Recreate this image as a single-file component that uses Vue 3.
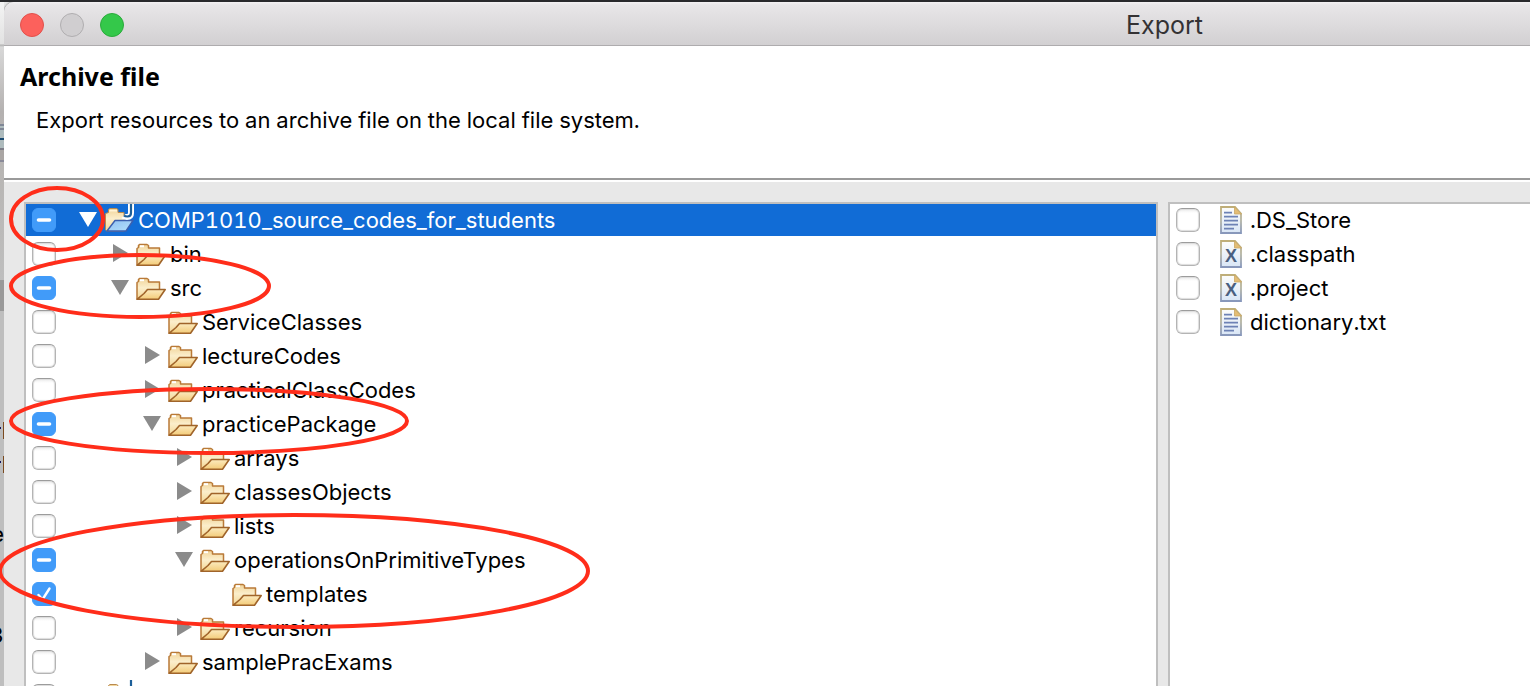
<script setup>
import { ref } from 'vue'

const tree = ref([
  { name: 'COMP1010_source_codes_for_students', depth: 0, state: 'mixed', open: true, project: true, selected: true },
  { name: 'bin', depth: 1, state: 'off', open: false },
  { name: 'src', depth: 1, state: 'mixed', open: true },
  { name: 'ServiceClasses', depth: 2, state: 'off', leaf: true },
  { name: 'lectureCodes', depth: 2, state: 'off', open: false },
  { name: 'practicalClassCodes', depth: 2, state: 'off', open: false },
  { name: 'practicePackage', depth: 2, state: 'mixed', open: true },
  { name: 'arrays', depth: 3, state: 'off', open: false },
  { name: 'classesObjects', depth: 3, state: 'off', open: false },
  { name: 'lists', depth: 3, state: 'off', open: false },
  { name: 'operationsOnPrimitiveTypes', depth: 3, state: 'mixed', open: true },
  { name: 'templates', depth: 4, state: 'on', leaf: true },
  { name: 'recursion', depth: 3, state: 'off', open: false },
  { name: 'samplePracExams', depth: 2, state: 'off', open: false },
  { name: '', depth: 0, state: 'off', leaf: true, project: true },
])

const files = ref([
  { name: '.DS_Store', kind: 'text', on: false },
  { name: '.classpath', kind: 'xml', on: false },
  { name: '.project', kind: 'xml', on: false },
  { name: 'dictionary.txt', kind: 'text', on: false },
])

function toggle(row) {
  row.state = row.state === 'on' ? 'off' : 'on'
}
</script>

<template>
  <div class="desktop">
    <div class="behind" aria-hidden="true">
      <i class="stripes"></i>
      <i class="thumb"></i>
      <i class="mark first"></i>
      <i class="mark second"></i>
      <span class="bit upper">e</span>
      <span class="bit lower">3</span>
    </div>

    <section class="window">
      <header class="titlebar">
        <div class="lights">
          <button type="button" class="light close" aria-label="Close"></button>
          <button type="button" class="light minimise" aria-label="Minimise" disabled></button>
          <button type="button" class="light zoom" aria-label="Zoom"></button>
        </div>
        <span class="title">Export</span>
      </header>

      <div class="banner">
        <h1>Archive file</h1>
        <p>Export resources to an archive file on the local file system.</p>
      </div>

      <main class="body">
        <ul class="pane" aria-label="Folders">
          <li v-for="(row, i) in tree" :key="i" class="row" :class="{ selected: row.selected }">
            <span class="check">
              <input
                :id="'folder-' + i"
                type="checkbox"
                :aria-label="row.name || 'Project'"
                :checked="row.state === 'on'"
                :indeterminate.prop="row.state === 'mixed'"
                @change="toggle(row)"
              />
              <svg v-if="row.state === 'mixed'" viewBox="0 0 24 24"><path d="M6.500 12H17.500" stroke-width="3.600" /></svg>
              <svg v-else-if="row.state === 'on'" viewBox="0 0 24 24"><path d="M6.500 13L10.500 17.500L17.500 6.500" stroke-width="2.400" /></svg>
            </span>
            <span class="indent" :style="{ width: row.depth * 32 + 'px' }"></span>
            <span v-if="row.leaf" class="arrow"></span>
            <button
              v-else
              type="button"
              class="arrow"
              :aria-expanded="row.open"
              :aria-label="'Toggle ' + row.name"
            >
              <svg viewBox="0 0 20 32">
                <path v-if="row.open" d="M1 8H19L10 23Z" />
                <path v-else d="M3 6L18 15L3 24Z" />
              </svg>
            </button>
            <svg v-if="row.project" class="folder" viewBox="0 0 32 32">
              <path d="M4.500 8.500V5.500L6 4.500H12.500L14 5.500V8.500H20V27H2.500L1.500 25.500V9.500Z" fill="url(#tan)" stroke="#b98a4e" stroke-width="1" />
              <path d="M5.500 6.800H13" stroke="#fff3d6" stroke-width="1.600" />
              <path d="M11 16.500H29L22 27H3Z" fill="url(#sky)" stroke="#3c5fae" stroke-width="1.400" stroke-linejoin="round" />
              <path d="M27 0V9Q27 13 23 13Q20.500 13 19.500 12" fill="none" stroke="#fff" stroke-width="6" />
              <path d="M27 0V9Q27 12.500 23.500 12.500Q21 12.500 20 11.500" fill="none" stroke="#1c5f99" stroke-width="2.200" />
            </svg>
            <svg v-else class="folder" viewBox="0 0 32 32">
              <path d="M1 27V10.500L2.500 9.500V7.500L3.500 6.500H11L12.500 7.500V10H23.500V18L22 27Z" fill="url(#tan)" stroke="#b97a38" stroke-width="1.500" stroke-linejoin="round" />
              <path d="M4 8.200H8" stroke="#fff" stroke-width="2" />
              <path d="M1 27.300L8 21.500L11.500 17.500H29.200L22.500 27.300Z" fill="url(#front)" stroke="#a0642a" stroke-width="1.600" stroke-linejoin="round" />
            </svg>
            <label class="name" :for="'folder-' + i">{{ row.name }}</label>
          </li>
        </ul>

        <ul class="pane" aria-label="Files">
          <li v-for="(file, i) in files" :key="file.name" class="row">
            <span class="check">
              <input :id="'file-' + i" v-model="file.on" type="checkbox" />
              <svg v-if="file.on" viewBox="0 0 24 24"><path d="M6.500 13L10.500 17.500L17.500 6.500" stroke-width="2.400" /></svg>
            </span>
            <svg class="doc" viewBox="0 0 22 28">
              <path d="M1 1H15L21 7.500V27H1Z" fill="url(#paper)" stroke="url(#rim)" stroke-width="1.800" />
              <path d="M14.500 1L21.500 8H14.500Z" fill="#e3bd75" stroke="#c9a765" stroke-width=".8" />
              <path v-if="file.kind === 'text'" d="M4 6.700H12M4 10.700H18M4 14.700H18M4 18.700H18M4 22.700H14" stroke="#6d82b5" stroke-width="1.700" />
              <text v-else x="11" y="22" text-anchor="middle" class="glyph">X</text>
            </svg>
            <label class="name" :for="'file-' + i">{{ file.name }}</label>
          </li>
        </ul>
      </main>
    </section>

    <svg class="marker" viewBox="0 0 600 686" aria-hidden="true">
      <defs>
        <linearGradient id="tan" x1="0" y1="0" x2="0" y2="1">
          <stop offset="0" stop-color="#f1d49a" /><stop offset=".45" stop-color="#fbeecb" /><stop offset="1" stop-color="#f3d795" />
        </linearGradient>
        <linearGradient id="front" x1="0" y1="0" x2="0" y2="1">
          <stop offset="0" stop-color="#fcebc0" /><stop offset="1" stop-color="#f3cb78" />
        </linearGradient>
        <linearGradient id="sky" x1="0" y1="0" x2="1" y2="1">
          <stop offset="0" stop-color="#8fc0f2" /><stop offset="1" stop-color="#b4e0fb" />
        </linearGradient>
        <linearGradient id="paper" x1="0" y1="0" x2="0" y2="1">
          <stop offset="0" stop-color="#fdfdfb" /><stop offset="1" stop-color="#d9e6f6" />
        </linearGradient>
        <linearGradient id="rim" x1="0" y1="0" x2="0" y2="1">
          <stop offset="0" stop-color="#bfae78" /><stop offset=".5" stop-color="#b5b5a4" /><stop offset="1" stop-color="#8797bb" />
        </linearGradient>
      </defs>
      <ellipse cx="57" cy="219" rx="46" ry="31" />
      <ellipse cx="140" cy="286" rx="129" ry="31" />
      <ellipse cx="209" cy="421" rx="198" ry="32" />
      <ellipse cx="294" cy="571" rx="294" ry="56" />
    </svg>
  </div>
</template>

<style>
body {
  margin: 0;
  overflow: hidden;
}
</style>

<style scoped>
.desktop {
  position: relative;
  display: flex;
  box-sizing: border-box;
  height: 100vh;
  overflow: hidden;
  border-top: 2px solid #29292c;
  background: #e6e6e6;
  font-family: Inter, "Noto Sans", sans-serif;
  font-size: 22px;
  font-variant-numeric: tabular-nums;
  color: #000;
}
.behind {
  position: relative;
  flex: none;
  width: 4px;
  overflow: hidden;
  background: linear-gradient(#f4f4f4 0, #e2e2e2 42px, #b0b0b0 43px, #d8d8d8 45px, #b4b1b0 110px, #b8b6b4 170px, #bebebe 280px, #bebebe);
}
.behind i,
.behind span {
  position: absolute;
}
.stripes {
  top: 122px;
  left: 0;
  width: 4px;
  height: 38px;
  background: linear-gradient(#7f8796 0 2px, #aebbbd 2px 4px, #7f8796 4px 6px, #aebbbd 6px 14px, #1b4a70 14px 16px, #aebbbd 16px 24px, #7d7d88 24px 26px, #aaa6a4 26px 36px, #8a8a99 36px);
}
.thumb {
  top: 278px;
  left: 0;
  width: 4px;
  height: 31px;
  background: #999;
}
.mark {
  left: 0;
  box-sizing: border-box;
  width: 4px;
  height: 17px;
  border-right: 1px solid #7b4a1f;
  background: linear-gradient(#14145c, #14145c) 0 5px / 1px 2px no-repeat;
}
.first { top: 420px; }
.second { top: 454px; }
.bit {
  right: 0;
  line-height: 24px;
}
.upper { top: 520px; }
.lower { top: 621px; }

.window {
  display: flex;
  flex: 1;
  flex-direction: column;
  min-width: 0;
  overflow: hidden;
  border-top-left-radius: 10px;
  background: #e8e8e8;
  box-shadow: 0 0 2px #444;
}
.titlebar {
  display: flex;
  align-items: center;
  justify-content: space-between;
  box-sizing: border-box;
  flex: none;
  height: 44px;
  padding: 2px 327px 0 16px;
  border-bottom: 1px solid #aeacae;
  background: linear-gradient(#f3f1f3 0, #e8e6e8 3px, #d2d0d2);
}
.lights {
  display: flex;
  gap: 16px;
}
.light {
  box-sizing: border-box;
  width: 24px;
  height: 24px;
  padding: 0;
  border: 1px solid;
  border-radius: 50%;
}
.close { border-color: #e2504b; background: #fc615c; }
.minimise { border-color: #b0aeb0; background: #d0ced0; }
.zoom { border-color: #2aab3b; background: #34c84a; }
.title {
  color: #343234;
  font-size: 25px;
  line-height: 32px;
}
.banner {
  box-sizing: border-box;
  flex: none;
  height: 134px;
  padding: 14px 16px 0;
  border-bottom: 2px solid #9a9a9a;
  background: #fff;
}
h1 {
  margin: 0;
  font: bold 25px/32px "Noto Sans", sans-serif;
}
p {
  margin: 14px 0 0 16px;
  line-height: 28px;
}
.body {
  display: grid;
  flex: 1;
  grid-template-columns: minmax(0, 1134fr) minmax(0, 362fr);
  gap: 10px;
  min-height: 0;
  padding: 20px 0 0 20px;
  border-top: 2px solid #fff;
}
.pane {
  display: flex;
  flex-direction: column;
  gap: 2px;
  min-height: 0;
  margin: 0;
  padding: 0;
  overflow: hidden;
  border: 2px solid #bfbfbf;
  border-bottom: 0;
  background: #fff;
  list-style: none;
}
.pane:last-child {
  border-right: 0;
}
.row {
  display: flex;
  flex: none;
  align-items: center;
  height: 32px;
  padding-left: 6px;
}
.selected {
  background: #116cd6;
  color: #fff;
}
.check {
  display: grid;
  flex: none;
  width: 24px;
  height: 24px;
}
.check > * {
  grid-area: 1 / 1;
}
.check input {
  box-sizing: border-box;
  width: 24px;
  height: 24px;
  margin: 0;
  border: 1px solid #b4b4b4;
  border-top-color: #9c9c9c;
  border-radius: 6px;
  background: linear-gradient(#ececec, #fff 4px);
  box-shadow: inset 0 0 1px 1px #dcdcdc;
  appearance: none;
}
.check input:checked,
.check input:indeterminate {
  border-color: #419bf9;
  background: #419bf9;
  box-shadow: none;
}
.check svg {
  width: 24px;
  height: 24px;
  fill: none;
  stroke: #fff;
  stroke-linecap: round;
  stroke-linejoin: round;
  pointer-events: none;
}
.indent {
  flex: none;
}
.arrow {
  flex: none;
  width: 20px;
  height: 32px;
  margin: 0 6px 0 22px;
  padding: 0;
  border: 0;
  background: none;
  fill: #8b8b8b;
}
.arrow svg {
  display: block;
  width: 20px;
  height: 32px;
}
.selected .arrow {
  fill: #fff;
}
.folder {
  flex: none;
  width: 32px;
  height: 32px;
}
.doc {
  flex: none;
  width: 22px;
  height: 28px;
  margin: 0 6px 0 20px;
}
.glyph {
  fill: #4a6080;
  font: bold 18px "Liberation Sans", sans-serif;
}
.name {
  margin-left: 2px;
  line-height: 32px;
  white-space: nowrap;
}
.marker {
  position: absolute;
  top: -2px;
  left: 0;
  width: 600px;
  height: 686px;
  fill: none;
  stroke: #ff2d1a;
  stroke-width: 4px;
  pointer-events: none;
}
</style>
